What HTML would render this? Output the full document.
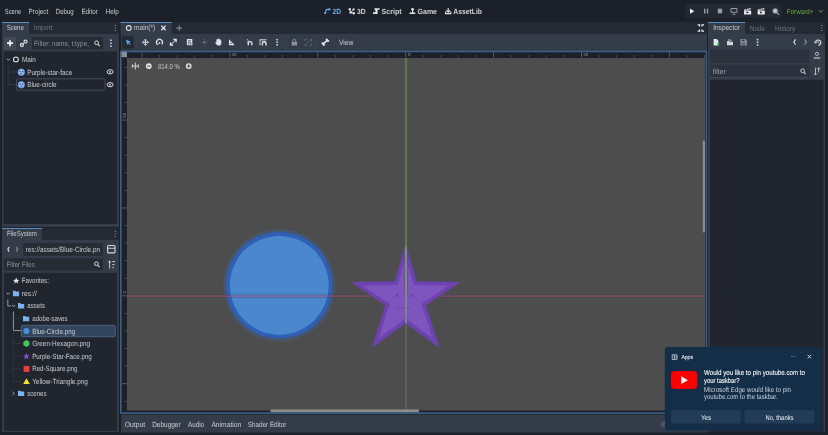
<!DOCTYPE html>
<html><head><meta charset="utf-8">
<style>
*{margin:0;padding:0}
html,body{width:828px;height:435px;overflow:hidden;background:#1c2028}
svg{display:block;will-change:transform;text-rendering:geometricPrecision;font-family:"Liberation Sans",sans-serif}
</style></head><body>
<svg width="828" height="435" viewBox="0 0 828 435">
<rect width="828" height="435" fill="#1c2028"/>
<text x="4.80" y="13.6" font-size="7.5" fill="#caccd0" textLength="16.50" lengthAdjust="spacingAndGlyphs" >Scene</text>
<text x="28.60" y="13.6" font-size="7.5" fill="#caccd0" textLength="19.60" lengthAdjust="spacingAndGlyphs" >Project</text>
<text x="55.80" y="13.6" font-size="7.5" fill="#caccd0" textLength="17.90" lengthAdjust="spacingAndGlyphs" >Debug</text>
<text x="81.40" y="13.6" font-size="7.5" fill="#caccd0" textLength="16.40" lengthAdjust="spacingAndGlyphs" >Editor</text>
<text x="105.80" y="13.6" font-size="7.5" fill="#caccd0" textLength="13.00" lengthAdjust="spacingAndGlyphs" >Help</text>
<text x="332.50" y="13.6" font-size="7.5" fill="#6db0ee" font-weight="bold" textLength="8.50" lengthAdjust="spacingAndGlyphs" >2D</text>
<text x="357.00" y="13.6" font-size="7.5" fill="#d0d2d5" font-weight="bold" textLength="8.70" lengthAdjust="spacingAndGlyphs" >3D</text>
<text x="381.60" y="13.6" font-size="7.5" fill="#d0d2d5" font-weight="bold" textLength="20.00" lengthAdjust="spacingAndGlyphs" >Script</text>
<text x="417.60" y="13.6" font-size="7.5" fill="#d0d2d5" font-weight="bold" textLength="19.40" lengthAdjust="spacingAndGlyphs" >Game</text>
<text x="453.30" y="13.6" font-size="7.5" fill="#d0d2d5" font-weight="bold" textLength="28.70" lengthAdjust="spacingAndGlyphs" >AssetLib</text>
<rect x="685.4" y="4" width="96" height="14" fill="#232833" rx="2"/>
<text x="786.80" y="13.6" font-size="7.3" fill="#68ad48" textLength="26.60" lengthAdjust="spacingAndGlyphs" >Forward+</text>
<rect x="2" y="22" width="117" height="205" fill="#353c49" />
<rect x="29" y="22" width="90" height="12" fill="#242a33" />
<rect x="2" y="22" width="27" height="1" fill="#5a8fc6" />
<text x="6.70" y="30.2" font-size="7.5" fill="#caccd0" textLength="17.10" lengthAdjust="spacingAndGlyphs" >Scene</text>
<text x="33.60" y="30.2" font-size="7.5" fill="#6e737b" textLength="19.10" lengthAdjust="spacingAndGlyphs" >Import</text>
<rect x="4" y="37" width="12" height="13" fill="#434855" rx="1"/>
<rect x="32" y="37" width="71" height="12.6" fill="#262b34" rx="1"/>
<text x="34.10" y="45.8" font-size="7.5" fill="#8b9097" textLength="54.90" lengthAdjust="spacingAndGlyphs" >Filter: name, t:type,</text>
<rect x="3.5" y="51.5" width="113.5" height="172.5" fill="#21252e" />
<text x="22.00" y="61.9" font-size="7.5" fill="#caccd0" textLength="13.90" lengthAdjust="spacingAndGlyphs" >Main</text>
<text x="27.20" y="74.6" font-size="7.5" fill="#caccd0" textLength="45.00" lengthAdjust="spacingAndGlyphs" >Purple-star-face</text>
<text x="27.20" y="87.0" font-size="7.5" fill="#caccd0" textLength="29.40" lengthAdjust="spacingAndGlyphs" >Blue-circle</text>
<rect x="16.5" y="78.8" width="88.5" height="11.4" fill="none" stroke="#454b57" stroke-width="1" rx="1"/>
<rect x="2" y="228" width="117" height="204" fill="#353c49" />
<rect x="42" y="228" width="77" height="12" fill="#242a33" />
<rect x="2" y="228" width="40" height="1" fill="#5a8fc6" />
<text x="6.90" y="236.4" font-size="7.5" fill="#caccd0" textLength="29.90" lengthAdjust="spacingAndGlyphs" >FileSystem</text>
<rect x="23.2" y="243" width="79.7" height="12.7" fill="#262b34" rx="1"/>
<text x="25.80" y="251.8" font-size="7.5" fill="#caccd0" textLength="74.20" lengthAdjust="spacingAndGlyphs" >res://assets/Blue-Circle.pn</text>
<rect x="4" y="258.3" width="99" height="12.3" fill="#262b34" rx="1"/>
<text x="6.50" y="267" font-size="7.5" fill="#8b9097" textLength="28.30" lengthAdjust="spacingAndGlyphs" >Filter Files</text>
<rect x="4" y="272.8" width="113" height="158" fill="#21252e" />
<rect x="21.3" y="325.3" width="94" height="11.4" fill="#34465e" stroke="#4f6a8c" stroke-width="0.8" rx="1"/>
<text x="21.80" y="283.4" font-size="7.5" fill="#caccd0" textLength="27.10" lengthAdjust="spacingAndGlyphs" >Favorites:</text>
<text x="21.80" y="296.1" font-size="7.5" fill="#caccd0" textLength="15.00" lengthAdjust="spacingAndGlyphs" >res://</text>
<text x="27.30" y="308.4" font-size="7.5" fill="#caccd0" textLength="17.70" lengthAdjust="spacingAndGlyphs" >assets</text>
<text x="32.20" y="321.2" font-size="7.5" fill="#caccd0" textLength="35.40" lengthAdjust="spacingAndGlyphs" >adobe-saves</text>
<text x="32.20" y="333.5" font-size="7.5" fill="#caccd0" textLength="43.00" lengthAdjust="spacingAndGlyphs" >Blue-Circle.png</text>
<text x="32.20" y="346.0" font-size="7.5" fill="#caccd0" textLength="58.00" lengthAdjust="spacingAndGlyphs" >Green-Hexagon.png</text>
<text x="32.20" y="358.8" font-size="7.5" fill="#caccd0" textLength="59.60" lengthAdjust="spacingAndGlyphs" >Purple-Star-Face.png</text>
<text x="32.20" y="371.4" font-size="7.5" fill="#caccd0" textLength="45.30" lengthAdjust="spacingAndGlyphs" >Red-Square.png</text>
<text x="32.20" y="383.8" font-size="7.5" fill="#caccd0" textLength="55.60" lengthAdjust="spacingAndGlyphs" >Yellow-Triangle.png</text>
<text x="27.30" y="396.0" font-size="7.5" fill="#caccd0" textLength="19.20" lengthAdjust="spacingAndGlyphs" >scenes</text>
<rect x="121" y="22" width="586" height="12" fill="#242a33" />
<rect x="120.5" y="22" width="51.2" height="12" fill="#353c49" />
<rect x="120.5" y="22" width="51.2" height="1" fill="#5a8fc6" />
<text x="134.00" y="30.2" font-size="7.5" fill="#caccd0" textLength="21.20" lengthAdjust="spacingAndGlyphs" >main(*)</text>
<rect x="121" y="34" width="586" height="17" fill="#353c49" />
<rect x="122.2" y="36" width="11.5" height="12.7" fill="#242a33" rx="1"/>
<text x="339.00" y="44.5" font-size="7.5" fill="#caccd0" textLength="14.48" lengthAdjust="spacingAndGlyphs" >View</text>
<rect x="120.8" y="51.5" width="585.6" height="361.6" fill="#1c2029" stroke="#3a5f89" stroke-width="1.6"/>
<rect x="121.5" y="51.8" width="5.5" height="5.4" fill="#8a8d93" />
<rect x="141.5" y="52.4" width="0.9" height="5" fill="#5b6170" />
<rect x="159.1" y="55.2" width="0.9" height="2.3" fill="#4f5563" />
<rect x="176.7" y="55.2" width="0.9" height="2.3" fill="#4f5563" />
<rect x="194.2" y="55.2" width="0.9" height="2.3" fill="#4f5563" />
<rect x="211.79999999999998" y="55.2" width="0.9" height="2.3" fill="#4f5563" />
<rect x="229.4" y="52.4" width="0.9" height="5" fill="#5b6170" />
<rect x="247.0" y="55.2" width="0.9" height="2.3" fill="#4f5563" />
<rect x="264.6" y="55.2" width="0.9" height="2.3" fill="#4f5563" />
<rect x="282.1" y="55.2" width="0.9" height="2.3" fill="#4f5563" />
<rect x="299.70000000000005" y="55.2" width="0.9" height="2.3" fill="#4f5563" />
<rect x="317.3" y="52.4" width="0.9" height="5" fill="#5b6170" />
<rect x="334.90000000000003" y="55.2" width="0.9" height="2.3" fill="#4f5563" />
<rect x="352.5" y="55.2" width="0.9" height="2.3" fill="#4f5563" />
<rect x="370.0" y="55.2" width="0.9" height="2.3" fill="#4f5563" />
<rect x="387.6" y="55.2" width="0.9" height="2.3" fill="#4f5563" />
<rect x="405.20000000000005" y="52.4" width="0.9" height="5" fill="#5b6170" />
<rect x="422.8" y="55.2" width="0.9" height="2.3" fill="#4f5563" />
<rect x="440.40000000000003" y="55.2" width="0.9" height="2.3" fill="#4f5563" />
<rect x="457.90000000000003" y="55.2" width="0.9" height="2.3" fill="#4f5563" />
<rect x="475.5" y="55.2" width="0.9" height="2.3" fill="#4f5563" />
<rect x="493.1" y="52.4" width="0.9" height="5" fill="#5b6170" />
<rect x="510.70000000000005" y="55.2" width="0.9" height="2.3" fill="#4f5563" />
<rect x="528.3000000000001" y="55.2" width="0.9" height="2.3" fill="#4f5563" />
<rect x="545.8000000000001" y="55.2" width="0.9" height="2.3" fill="#4f5563" />
<rect x="563.4" y="55.2" width="0.9" height="2.3" fill="#4f5563" />
<rect x="581.0" y="52.4" width="0.9" height="5" fill="#5b6170" />
<rect x="598.6" y="55.2" width="0.9" height="2.3" fill="#4f5563" />
<rect x="616.2" y="55.2" width="0.9" height="2.3" fill="#4f5563" />
<rect x="633.7" y="55.2" width="0.9" height="2.3" fill="#4f5563" />
<rect x="651.3000000000001" y="55.2" width="0.9" height="2.3" fill="#4f5563" />
<rect x="668.9" y="52.4" width="0.9" height="5" fill="#5b6170" />
<rect x="686.5" y="55.2" width="0.9" height="2.3" fill="#4f5563" />
<rect x="704.1" y="55.2" width="0.9" height="2.3" fill="#4f5563" />
<text x="408.00" y="56.2" font-size="4.5" fill="#8c9099" >0</text>
<text x="232.20" y="56.2" font-size="4.5" fill="#8c9099" textLength="4.30" lengthAdjust="spacingAndGlyphs" >50</text>
<text x="583.60" y="56.2" font-size="4.5" fill="#8c9099" textLength="4.50" lengthAdjust="spacingAndGlyphs" >50</text>
<rect x="124.6" y="66.89999999999999" width="2.4" height="0.9" fill="#4f5563" />
<rect x="124.6" y="84.39999999999999" width="2.4" height="0.9" fill="#4f5563" />
<rect x="124.6" y="102.0" width="2.4" height="0.9" fill="#4f5563" />
<rect x="122" y="119.6" width="5" height="0.9" fill="#5b6170" />
<rect x="124.6" y="137.2" width="2.4" height="0.9" fill="#4f5563" />
<rect x="124.6" y="154.79999999999998" width="2.4" height="0.9" fill="#4f5563" />
<rect x="124.6" y="172.29999999999998" width="2.4" height="0.9" fill="#4f5563" />
<rect x="124.6" y="189.9" width="2.4" height="0.9" fill="#4f5563" />
<rect x="122" y="207.5" width="5" height="0.9" fill="#5b6170" />
<rect x="124.6" y="225.1" width="2.4" height="0.9" fill="#4f5563" />
<rect x="124.6" y="242.7" width="2.4" height="0.9" fill="#4f5563" />
<rect x="124.6" y="260.20000000000005" width="2.4" height="0.9" fill="#4f5563" />
<rect x="124.6" y="277.8" width="2.4" height="0.9" fill="#4f5563" />
<rect x="122" y="295.40000000000003" width="5" height="0.9" fill="#5b6170" />
<rect x="124.6" y="313.0" width="2.4" height="0.9" fill="#4f5563" />
<rect x="124.6" y="330.6" width="2.4" height="0.9" fill="#4f5563" />
<rect x="124.6" y="348.1" width="2.4" height="0.9" fill="#4f5563" />
<rect x="124.6" y="365.70000000000005" width="2.4" height="0.9" fill="#4f5563" />
<rect x="122" y="383.3" width="5" height="0.9" fill="#5b6170" />
<rect x="124.6" y="400.90000000000003" width="2.4" height="0.9" fill="#4f5563" />
<text x="0" y="0" font-size="4.5" fill="#8c9099" transform="translate(126 117.8) rotate(-90)">50</text>
<text x="0" y="0" font-size="4.5" fill="#8c9099" transform="translate(126 293.6) rotate(-90)">0</text>
<rect x="127" y="58" width="578" height="352.5" fill="#4d4d4d" />
<text x="157.90" y="68.6" font-size="7.5" fill="#c8c8c8" textLength="21.90" lengthAdjust="spacingAndGlyphs" >814.0 %</text>
<circle cx="279.3" cy="285.3" r="54.7" fill="none" stroke="#475568" stroke-width="2.8"/>
<circle cx="279.3" cy="285.3" r="53.3" fill="#2f5fb6"/>
<circle cx="279.3" cy="285.3" r="49.4" fill="#4a87cd"/>
<rect x="127" y="295.2" width="578" height="2" fill="#b04a86" opacity="0.42"/>
<rect x="127" y="294.3" width="578" height="0.9" fill="#3c4444" opacity="0.3"/>
<rect x="127" y="297.2" width="578" height="0.9" fill="#3c4444" opacity="0.3"/>
<clipPath id="sc"><path d="M405.7 245.3 L416.2 281.8 L459 282.6 L425.2 305 L438.6 346.5 L405.7 322.8 L372.8 346.5 L385.8 305 L352.6 282.6 L395.2 281.8 Z"/></clipPath>
<path d="M405.7 245.3 L416.2 281.8 L459 282.6 L425.2 305 L438.6 346.5 L405.7 322.8 L372.8 346.5 L385.8 305 L352.6 282.6 L395.2 281.8 Z" fill="none" stroke="#564a6c" stroke-width="3" stroke-linejoin="round"/>
<path d="M405.7 245.3 L416.2 281.8 L459 282.6 L425.2 305 L438.6 346.5 L405.7 322.8 L372.8 346.5 L385.8 305 L352.6 282.6 L395.2 281.8 Z" fill="#7e54bd" stroke="#6e42b5" stroke-width="6.5" clip-path="url(#sc)"/>
<rect x="396" y="294" width="1.6" height="1.6" fill="#5f3a9a" />
<rect x="394.6" y="295.6" width="4" height="1" fill="#6a44a8" />
<rect x="411.6" y="294" width="1.6" height="1.6" fill="#5f3a9a" />
<rect x="410.4" y="295.6" width="4" height="1" fill="#6a44a8" />
<rect x="395.4" y="307.6" width="1.4" height="1.2" fill="#6844a6" />
<rect x="397.79999999999995" y="307.6" width="1.4" height="1.2" fill="#6844a6" />
<rect x="400.2" y="307.6" width="1.4" height="1.2" fill="#6844a6" />
<rect x="402.59999999999997" y="307.6" width="1.4" height="1.2" fill="#6844a6" />
<rect x="405.0" y="307.6" width="1.4" height="1.2" fill="#6844a6" />
<rect x="407.4" y="307.6" width="1.4" height="1.2" fill="#6844a6" />
<rect x="403.5" y="318.5" width="4" height="1.2" fill="#6a46a8" />
<rect x="405" y="58" width="2" height="237.2" fill="#5f7a3c" />
<rect x="405" y="297.2" width="2" height="113.3" fill="#5b5f62" />
<rect x="404.2" y="58" width="0.8" height="237" fill="#55556a" opacity="0.6"/>
<rect x="407" y="58" width="0.8" height="237" fill="#55556a" opacity="0.6"/>
<rect x="405" y="240" width="2" height="110" fill="#9a9ac0" opacity="0.55" clip-path="url(#sc)"/>
<rect x="270.5" y="409.5" width="148.5" height="2.8" fill="#8d8d8d" rx="1"/>
<rect x="702.8" y="140.4" width="2.2" height="92" fill="#8d8d8d" rx="1"/>
<rect x="121" y="414.5" width="586" height="18" fill="#353c49" />
<text x="124.80" y="426.8" font-size="7.5" fill="#caccd0" textLength="20.30" lengthAdjust="spacingAndGlyphs" >Output</text>
<text x="152.20" y="426.8" font-size="7.5" fill="#caccd0" textLength="28.40" lengthAdjust="spacingAndGlyphs" >Debugger</text>
<text x="188.00" y="426.8" font-size="7.5" fill="#caccd0" textLength="16.00" lengthAdjust="spacingAndGlyphs" >Audio</text>
<text x="211.40" y="426.8" font-size="7.5" fill="#caccd0" textLength="29.80" lengthAdjust="spacingAndGlyphs" >Animation</text>
<text x="247.80" y="426.8" font-size="7.5" fill="#caccd0" textLength="38.60" lengthAdjust="spacingAndGlyphs" >Shader Editor</text>
<rect x="708" y="22" width="117" height="410" fill="#353c49" />
<rect x="745" y="22" width="80" height="12" fill="#242a33" />
<rect x="708" y="22" width="37" height="1" fill="#5a8fc6" />
<text x="713.20" y="30.1" font-size="7.5" fill="#caccd0" textLength="26.80" lengthAdjust="spacingAndGlyphs" >Inspector</text>
<text x="750.00" y="30.5" font-size="7.5" fill="#6e737b" textLength="15.00" lengthAdjust="spacingAndGlyphs" >Node</text>
<text x="775.00" y="30.5" font-size="7.5" fill="#6e737b" textLength="20.20" lengthAdjust="spacingAndGlyphs" >History</text>
<rect x="710.4" y="49.7" width="99" height="13.2" fill="#2c323d" rx="1"/>
<rect x="710.4" y="64.7" width="99" height="13.3" fill="#2c323d" rx="1"/>
<text x="712.80" y="73.8" font-size="7.5" fill="#9a9fa6" textLength="13.00" lengthAdjust="spacingAndGlyphs" >filter</text>
<path d="M710.8 77.6 H809" fill="none" stroke="#6a707c" stroke-width="0.7" stroke-dasharray="1 1"/>
<rect x="710" y="79.8" width="113.5" height="352" fill="#21252e" />
<rect x="664.8" y="346.9" width="156.7" height="83.6" fill="#142e48" rx="3"/>
<text x="681.40" y="359.4" font-size="5.8" fill="#e8edf2" textLength="11.60" lengthAdjust="spacingAndGlyphs" stroke="#e8edf2" stroke-width="0.1">Apps</text>
<rect x="671" y="371" width="26.3" height="18" fill="#f00" rx="4"/>
<path d="M681.3 376.3 L687.9 380.2 L681.3 384.1 Z" fill="#f4f6f8" />
<text x="704.00" y="375.4" font-size="7.2" fill="#f2f5f8" textLength="101.00" lengthAdjust="spacingAndGlyphs" stroke="#f2f5f8" stroke-width="0.12">Would you like to pin youtube.com to</text>
<text x="704.00" y="383.3" font-size="7.2" fill="#f2f5f8" textLength="35.60" lengthAdjust="spacingAndGlyphs" stroke="#f2f5f8" stroke-width="0.12">your taskbar?</text>
<text x="704.00" y="391.6" font-size="7.2" fill="#c9d1da" textLength="87.00" lengthAdjust="spacingAndGlyphs" >Microsoft Edge would like to pin</text>
<text x="704.00" y="399.2" font-size="7.2" fill="#c9d1da" textLength="73.70" lengthAdjust="spacingAndGlyphs" >youtube.com to the taskbar.</text>
<rect x="670.9" y="410.1" width="70" height="13.5" fill="#223c57" rx="2"/>
<rect x="744.5" y="410.1" width="70" height="13.5" fill="#223c57" rx="2"/>
<text x="701.00" y="419.6" font-size="7" fill="#f2f5f8" textLength="10.00" lengthAdjust="spacingAndGlyphs" >Yes</text>
<text x="765.50" y="419.6" font-size="7" fill="#f2f5f8" textLength="28.00" lengthAdjust="spacingAndGlyphs" >No, thanks</text>
<path d="M325.2 13.2 L326.3 9.6 L329.3 9.4" fill="none" stroke="#6db0ee" stroke-width="1.1" />
<circle cx="325.2" cy="13" r="1.1" fill="#6db0ee"/><circle cx="329.4" cy="9.4" r="1.1" fill="#6db0ee"/>
<path d="M349.8 9.3 L350.6 12.6 L353.8 13.2 M350.6 12.6 L353.6 9.4" fill="none" stroke="#e0e2e5" stroke-width="0.9" />
<circle cx="349.8" cy="9.3" r="1.2" fill="#e0e2e5"/><circle cx="350.6" cy="12.6" r="1.2" fill="#e0e2e5"/><circle cx="353.8" cy="13.2" r="1.2" fill="#e0e2e5"/><circle cx="353.6" cy="9.4" r="1.1" fill="#e0e2e5"/>
<path d="M374.5 8.2 L379.7 8.2 L379.7 9.8 L377.6 9.8 L377.6 14 L373 14 L373 12.3 L375.4 12.3 L375.4 10 L374.5 10 Z" fill="#e0e2e5" />
<circle cx="412.6" cy="9.3" r="1.4" fill="#e0e2e5"/>
<path d="M412 10 L413.2 10 L413.2 12.6 L412 12.6 Z M409.4 12.4 L415.3 12.4 L415.3 14.1 L409.4 14.1 Z" fill="#e0e2e5" />
<path d="M448.2 8 L448.2 12 M446.3 10.3 L448.2 12.2 L450.1 10.3 M445.6 11.6 L445.6 13.6 L450.8 13.6 L450.8 11.6" fill="none" stroke="#e0e2e5" stroke-width="1.1" />
<path d="M690 8.6 L694.3 11.2 L690 13.8 Z" fill="#eef0f2" />
<rect x="704" y="8.7" width="1.4" height="4.8" fill="#9a9da3" />
<rect x="706.8" y="8.7" width="1.4" height="4.8" fill="#9a9da3" />
<rect x="717.8" y="8.7" width="4.3" height="4.6" fill="#9a9da3" />
<path d="M731 8.5 L737 8.5 L737 12.3 L731 12.3 Z" fill="none" stroke="#9a9da3" stroke-width="1" />
<path d="M732.5 14.2 L735.5 14.2" fill="none" stroke="#9a9da3" stroke-width="1" />
<rect x="744.0" y="10.4" width="7.2" height="4" fill="#e6e8ea" rx="0.5"/>
<path d="M744.0 9.6 L750.6 8 L750.9 9.2 L744.3000000000001 10.8 Z" fill="#e6e8ea" />
<path d="M746.0 8.8 L747.0 10 M748.4 8.3 L749.4 9.5" fill="none" stroke="#232833" stroke-width="0.7" />
<path d="M746.5 11.2 L749.0 12.4 L746.5 13.6 Z" fill="#232833" />
<rect x="757.6" y="10.4" width="7.2" height="4" fill="#e6e8ea" rx="0.5"/>
<path d="M757.6 9.6 L764.2 8 L764.5 9.2 L757.9000000000001 10.8 Z" fill="#e6e8ea" />
<path d="M759.6 8.8 L760.6 10 M762.0 8.3 L763.0 9.5" fill="none" stroke="#232833" stroke-width="0.7" />
<path d="M760.1 11.2 L762.6 12.4 L760.1 13.6 Z" fill="#232833" />
<circle cx="775.2" cy="10.9" r="2.7" fill="#9a9da3"/>
<circle cx="775.2" cy="10.9" r="1.5" fill="#c8cacd"/>
<path d="M777.1 12.8 L779 14.7" fill="none" stroke="#9a9da3" stroke-width="1.3" />
<path d="M818.8 10.2 L820.8 12.2 L822.8 10.2" fill="none" stroke="#5ea83e" stroke-width="1" />
<path d="M10 40.2 V46.2 M7 43.2 H13" fill="none" stroke="#f2f3f4" stroke-width="1.7" />
<circle cx="21.9" cy="45" r="1.5" fill="none" stroke="#d6d8db" stroke-width="1.3"/><circle cx="25.5" cy="41.6" r="1.5" fill="none" stroke="#d6d8db" stroke-width="1.3"/>
<path d="M22.8 44.2 L24.6 42.4" fill="none" stroke="#d0d2d5" stroke-width="1" />
<circle cx="96.6" cy="42.8" r="1.9" fill="none" stroke="#d6d8db" stroke-width="1"/>
<path d="M98 44.3 L99.8 46.1" fill="none" stroke="#d6d8db" stroke-width="1.1" />
<rect x="110.2" y="39.5" width="1.5" height="1.5" fill="#d6d8db" />
<rect x="110.2" y="42.5" width="1.5" height="1.5" fill="#d6d8db" />
<rect x="110.2" y="45.5" width="1.5" height="1.5" fill="#d6d8db" />
<rect x="114.8" y="25.0" width="1" height="1" fill="#9a9da3" />
<rect x="114.8" y="27.5" width="1" height="1" fill="#9a9da3" />
<rect x="114.8" y="30.0" width="1" height="1" fill="#9a9da3" />
<path d="M6.9 58.7 L8.5 60.4 L10.1 58.7" fill="none" stroke="#a0a4aa" stroke-width="1" />
<circle cx="15.9" cy="59.4" r="2.4" fill="none" stroke="#e0e2e5" stroke-width="1.05"/>
<path d="M8.2 65.5 V84.7 H16.3 M8.2 72 H17.5" fill="none" stroke="#343a45" stroke-width="0.9" />
<circle cx="21.3" cy="72.2" r="3.3" fill="#9cc3f7" stroke="#5a8fe4" stroke-width="0.8"/>
<rect x="19.4" y="71.0" width="1.1" height="1.3" fill="#22305a" />
<rect x="22.1" y="71.0" width="1.1" height="1.3" fill="#22305a" />
<rect x="20.6" y="73.3" width="1.4" height="1" fill="#2a3055" />
<rect x="23.2" y="71.60000000000001" width="0.9" height="0.9" fill="#d877b5" />
<ellipse cx="110.1" cy="71.8" rx="3" ry="2.1" fill="none" stroke="#dcdee1" stroke-width="1"/><circle cx="110.1" cy="71.8" r="0.9" fill="#dcdee1"/>
<circle cx="21.3" cy="84.8" r="3.3" fill="#9cc3f7" stroke="#5a8fe4" stroke-width="0.8"/>
<rect x="19.4" y="83.6" width="1.1" height="1.3" fill="#22305a" />
<rect x="22.1" y="83.6" width="1.1" height="1.3" fill="#22305a" />
<rect x="20.6" y="85.89999999999999" width="1.4" height="1" fill="#2a3055" />
<rect x="23.2" y="84.2" width="0.9" height="0.9" fill="#d877b5" />
<ellipse cx="110.1" cy="84.7" rx="3" ry="2.1" fill="none" stroke="#dcdee1" stroke-width="1"/><circle cx="110.1" cy="84.7" r="0.9" fill="#dcdee1"/>
<path d="M9.2 247 L7.8 249.3 L9.2 251.6" fill="none" stroke="#e0e2e5" stroke-width="1.1" />
<path d="M16.2 247 L17.6 249.3 L16.2 251.6" fill="none" stroke="#8c9096" stroke-width="1.1" />
<rect x="107.6" y="245.5" width="7.4" height="7.4" fill="none" stroke="#d6d8db" stroke-width="1.1" rx="1"/>
<rect x="107.6" y="247.8" width="7.4" height="0.9" fill="#d6d8db" />
<circle cx="96.4" cy="263.8" r="1.9" fill="none" stroke="#d6d8db" stroke-width="1"/>
<path d="M97.8 265.3 L99.6 267.1" fill="none" stroke="#d6d8db" stroke-width="1.1" />
<path d="M109.6 261 V268.5 M108.2 262.4 L109.6 261 L111 262.4 M112.2 261.6 H115 M112.2 264.6 H114.4 M112.2 267.6 H113.6" fill="none" stroke="#d6d8db" stroke-width="0.9" />
<rect x="114.8" y="231.0" width="1" height="1" fill="#9a9da3" />
<rect x="114.8" y="233.5" width="1" height="1" fill="#9a9da3" />
<rect x="114.8" y="236.0" width="1" height="1" fill="#9a9da3" />
<path d="M16.2 277.6 L17.1 279.8 L19.4 279.9 L17.6 281.3 L18.2 283.6 L16.2 282.3 L14.2 283.6 L14.8 281.3 L13 279.9 L15.3 279.8 Z" fill="#e6e8ea" />
<path d="M12.9 290.8 H15.2 L15.9 291.6 H19.1 V296.20000000000005 H12.9 Z" fill="#79b4ee" />
<path d="M18 303.09999999999997 H20.3 L21 303.9 H24.2 V308.5 H18 Z" fill="#79b4ee" />
<path d="M23 315.9 H25.3 L26 316.7 H29.2 V321.3 H23 Z" fill="#79b4ee" />
<path d="M18 390.7 H20.3 L21 391.5 H24.2 V396.1 H18 Z" fill="#79b4ee" />
<path d="M6.6 292.6 L8.2 294.3 L9.8 292.6" fill="none" stroke="#a0a4aa" stroke-width="1" />
<path d="M12 305 L13.6 306.7 L15.2 305" fill="none" stroke="#a0a4aa" stroke-width="1" />
<path d="M12.6 391.9 L14.3 393.5 L12.6 395.1" fill="none" stroke="#a0a4aa" stroke-width="1" />
<path d="M7.8 299.5 V306 H11" fill="none" stroke="#9fa3a9" stroke-width="0.9" />
<path d="M13.4 311.5 V330.6 H21.3" fill="none" stroke="#9fa3a9" stroke-width="0.9" />
<path d="M13.4 318.7 H21 M13.4 330.6 V381.3 M13.4 343.5 H21 M13.4 356.3 H21 M13.4 368.9 H21 M13.4 381.3 H21" fill="none" stroke="#343a45" stroke-width="0.8" />
<circle cx="26.4" cy="331" r="3" fill="#4a90e2"/>
<path d="M26.4 340.1 L29.4 341.8 L29.4 345.2 L26.4 346.9 L23.4 345.2 L23.4 341.8 Z" fill="#4cc35c" />
<path d="M26.4 352.8 L27.3 355.2 L29.8 355.3 L27.8 356.8 L28.5 359.3 L26.4 357.9 L24.3 359.3 L25 356.8 L23 355.3 L25.5 355.2 Z" fill="#8a4fd6" />
<rect x="23.6" y="365.9" width="5.8" height="6" fill="#ee3b3b" />
<path d="M26.5 378.2 L29.8 384 L23.2 384 Z" fill="#f2e52a" />
<circle cx="128.8" cy="28" r="2.4" fill="none" stroke="#e0e2e5" stroke-width="1.05"/>
<path d="M161.3 25.6 L165.6 30.2 M165.6 25.6 L161.3 30.2" fill="none" stroke="#e6e8ea" stroke-width="1.3" />
<path d="M179.2 25.2 V31 M176.3 28.1 H182.1" fill="none" stroke="#7d828a" stroke-width="1.1" />
<path d="M697.6 24.9 H699.6 V26.5 M704 24.9 H702 V26.5 M697.6 31.1 H699.6 V29.5 M704 31.1 H702 V29.5" fill="none" stroke="#e6e8ea" stroke-width="1.2" />
<path d="M126 39.8 L130.9 41.6 L128.9 42.4 L130.8 44.3 L130 45 L128.1 43.2 L127.3 45 Z" fill="#5fa5e8" />
<path d="M145.4 39.6 V45 M142.7 42.3 H148.1" fill="none" stroke="#e0e2e5" stroke-width="1" />
<path d="M144.3 40.4 L145.4 39.2 L146.5 40.4 M144.3 44.2 L145.4 45.4 L146.5 44.2 M143.5 41.2 L142.3 42.3 L143.5 43.4 M147.3 41.2 L148.5 42.3 L147.3 43.4" fill="none" stroke="#e0e2e5" stroke-width="1" />
<path d="M157.3 44.4 A3 3 0 1 1 161.7 44.4" fill="none" stroke="#e0e2e5" stroke-width="1.2" />
<circle cx="159.5" cy="42.9" r="0.9" fill="#e0e2e5"/>
<path d="M156.6 43.3 L157.3 44.8 L158.6 44.1" fill="none" stroke="#e0e2e5" stroke-width="0.9" />
<circle cx="173.3" cy="42.3" r="0.8" fill="#e0e2e5"/>
<path d="M173.4 39.4 H176.2 V42.2 M170.4 42.4 V45.2 H173.2" fill="none" stroke="#e0e2e5" stroke-width="1.2" />
<path d="M174.2 41.4 L175.8 39.8 M170.8 44.8 L172.4 43.2" fill="none" stroke="#e0e2e5" stroke-width="1.1" />
<rect x="136.1" y="37" width="0.8" height="11" fill="#3d4350" />
<rect x="181.6" y="36" width="0.8" height="13" fill="#3d4350" />
<rect x="186.9" y="38.9" width="5.4" height="6.4" fill="#e0e2e5" rx="0.6"/>
<path d="M188 40.8 H191 M188 42.6 H189.6 M188 44.2 H189.4" fill="none" stroke="#353c49" stroke-width="0.8" />
<path d="M189.8 42.4 L194 44.6 L192 45 L191.4 46.2 Z" fill="#e0e2e5" stroke="#353c49" stroke-width="0.5" />
<circle cx="204.3" cy="42.3" r="1.2" fill="#737880"/>
<path d="M200.8 42.3 H202.3 M206.3 42.3 H207.8 M204.3 38.8 V40.3 M204.3 44.3 V45.8" fill="none" stroke="#626770" stroke-width="0.8" />
<path d="M215 42.8 L216.4 41.9 L216.4 39.6 Q217 38.8 217.6 39.6 L217.8 38.8 Q218.5 38.3 219 39 L219.3 39.2 Q220 38.9 220.5 39.6 L220.6 40.2 Q221.2 40.1 221.3 40.8 L221.3 44 Q220.8 45.5 219 45.5 L217.4 45.5 Z" fill="#e0e2e5" />
<path d="M229 39.2 V45.2 H234.8 Z" fill="#e0e2e5" />
<path d="M230.4 42.3 V43.9 H232" fill="#333a46" />
<rect x="240.4" y="36" width="0.8" height="13" fill="#3d4350" />
<path d="M248.3 45.3 V43.4 A1.8 1.8 0 0 1 251.9 43.4 V45.3" fill="none" stroke="#e0e2e5" stroke-width="1.4" />
<rect x="246.8" y="39.3" width="1" height="1" fill="#e0e2e5" />
<rect x="248.2" y="40.5" width="1" height="1" fill="#e0e2e5" />
<rect x="246.8" y="41.7" width="1" height="1" fill="#e0e2e5" />
<path d="M260 39.2 H266.4 V40.4 H260 Z" fill="#c6c8cb" />
<path d="M260 39.2 V45.4" fill="none" stroke="#c6c8cb" stroke-width="1" />
<rect x="262" y="41.4" width="1" height="1" fill="#c6c8cb" />
<rect x="264" y="41.4" width="1" height="1" fill="#c6c8cb" />
<path d="M262.4 45.4 V43.6 A1.8 1.8 0 0 1 266 43.6 V45.4" fill="none" stroke="#e0e2e5" stroke-width="1.4" />
<rect x="276.4" y="38.95" width="1.5" height="1.5" fill="#dcdee1" />
<rect x="276.4" y="41.55" width="1.5" height="1.5" fill="#dcdee1" />
<rect x="276.4" y="44.15" width="1.5" height="1.5" fill="#dcdee1" />
<rect x="285.4" y="36" width="0.8" height="13" fill="#3d4350" />
<path d="M292.8 42.2 V40.9 A1.5 1.5 0 0 1 295.8 40.9 V42.2" fill="none" stroke="#8d9096" stroke-width="1" />
<rect x="291.6" y="42" width="5.6" height="3.4" fill="#8d9096" rx="0.5"/>
<path d="M305 41 V39.3 H306.8 M309.8 39.3 H311.5 V41 M305 43.8 V45.4 H306.8 M309.8 45.4 H311.5 V43.8" fill="none" stroke="#6a6f77" stroke-width="0.8" />
<path d="M306.6 44 L310 40.6" fill="none" stroke="#6a6f77" stroke-width="0.8" />
<rect x="316" y="36" width="0.8" height="13" fill="#3d4350" />
<path d="M322.8 44.4 L327.6 40.2" fill="none" stroke="#e0e2e5" stroke-width="1.7" />
<circle cx="322.6" cy="43.4" r="1.1" fill="#e6e8ea"/><circle cx="323.8" cy="44.8" r="1.1" fill="#e6e8ea"/><circle cx="326.8" cy="39.6" r="1.1" fill="#e6e8ea"/><circle cx="328.2" cy="41" r="1.1" fill="#e6e8ea"/>
<rect x="333.4" y="36" width="0.8" height="13" fill="#3d4350" />
<rect x="357.5" y="36" width="0.8" height="13" fill="#3d4350" />
<path d="M135.3 62.6 V69.6 M132 66.1 H138.6" fill="none" stroke="#d0d2d5" stroke-width="1" />
<path d="M132.4 64.4 V67.8 M138.2 64.4 V67.8" fill="none" stroke="#d0d2d5" stroke-width="1" />
<circle cx="148.8" cy="66.1" r="2.9" fill="#e6e8ea"/>
<rect x="147" y="65.6" width="3.6" height="1" fill="#4d4d4d" />
<circle cx="188.7" cy="66.1" r="2.9" fill="#e6e8ea"/>
<rect x="186.9" y="65.6" width="3.6" height="1" fill="#4d4d4d" />
<rect x="188.2" y="64.3" width="1" height="3.6" fill="#4d4d4d" />
<path d="M713.6 39 H716.6 L718.4 40.8 V45.4 H713.6 Z" fill="#e6e8ea" />
<rect x="717" y="43.2" width="2.2" height="2.2" fill="#4cc35c" />
<path d="M727 41 H729.3 L730 41.8 H733 V45.3 H727 Z" fill="#d0d2d5" />
<path d="M728 40 H731 V41" fill="none" stroke="#d0d2d5" stroke-width="0.8" />
<path d="M740.4 39 H745.4 L746.9 40.5 V45.6 H740.4 Z" fill="#8d9096" />
<rect x="741.8" y="39.6" width="2.8" height="1.6" fill="#353c49" />
<rect x="741.6" y="42.6" width="3.8" height="2.2" fill="#5d626b" />
<rect x="756.8" y="38.85" width="1.5" height="1.5" fill="#dcdee1" />
<rect x="756.8" y="41.55" width="1.5" height="1.5" fill="#dcdee1" />
<rect x="756.8" y="44.25" width="1.5" height="1.5" fill="#dcdee1" />
<path d="M795.6 39.4 L793.8 42.1 L795.6 44.8" fill="none" stroke="#dcdee1" stroke-width="1.1" />
<path d="M804.6 39.4 L806.4 42.1 L804.6 44.8" fill="none" stroke="#8c9096" stroke-width="1.1" />
<path d="M815.6 42.6 A2.6 2.6 0 1 1 818.3 45.2" fill="none" stroke="#dcdee1" stroke-width="1.1" />
<path d="M814.2 41.6 L815.6 43.3 L817 41.6" fill="none" stroke="#dcdee1" stroke-width="1" />
<path d="M818.3 41.2 V42.8 L819.4 43.6" fill="none" stroke="#dcdee1" stroke-width="0.8" />
<rect x="821.3" y="25.0" width="1" height="1" fill="#9a9da3" />
<rect x="821.3" y="27.5" width="1" height="1" fill="#9a9da3" />
<rect x="821.3" y="30.0" width="1" height="1" fill="#9a9da3" />
<circle cx="817" cy="53.8" r="1.6" fill="none" stroke="#c6c8cb" stroke-width="0.9"/>
<path d="M813.8 58.2 H820.2 M814.8 56.8 V58.6 M817 56.8 V58.6 M819.2 56.8 V58.6" fill="none" stroke="#c6c8cb" stroke-width="0.8" />
<circle cx="802.6" cy="70.8" r="1.9" fill="none" stroke="#c6c8cb" stroke-width="1"/>
<path d="M804 72.3 L805.8 74.1" fill="none" stroke="#c6c8cb" stroke-width="1.1" />
<path d="M815.5 67.6 V75 M814.2 73.6 L815.5 75 L816.8 73.6 M818.6 67.6 V72.4 M817.2 67.8 L818.6 69.4 L820 67.8" fill="none" stroke="#c6c8cb" stroke-width="0.9" />
<path d="M660.2 424.2 L664.8 420 L664.8 428.4 Z" fill="#505866" />
<path d="M672.2 354.8 H677 V359.4 H672.2 Z M674.3 354.8 V359.4 M674.3 357 H677" fill="none" stroke="#d8dde3" stroke-width="0.75" />
<path d="M791 356.4 h0.6 M792.6 356.4 h0.6 M794.2 356.4 h0.6" fill="none" stroke="#b9c2cc" stroke-width="0.8" />
<path d="M807.6 354.8 L811.2 358.4 M811.2 354.8 L807.6 358.4" fill="none" stroke="#d8dde3" stroke-width="0.9" />
</svg>
</body></html>
